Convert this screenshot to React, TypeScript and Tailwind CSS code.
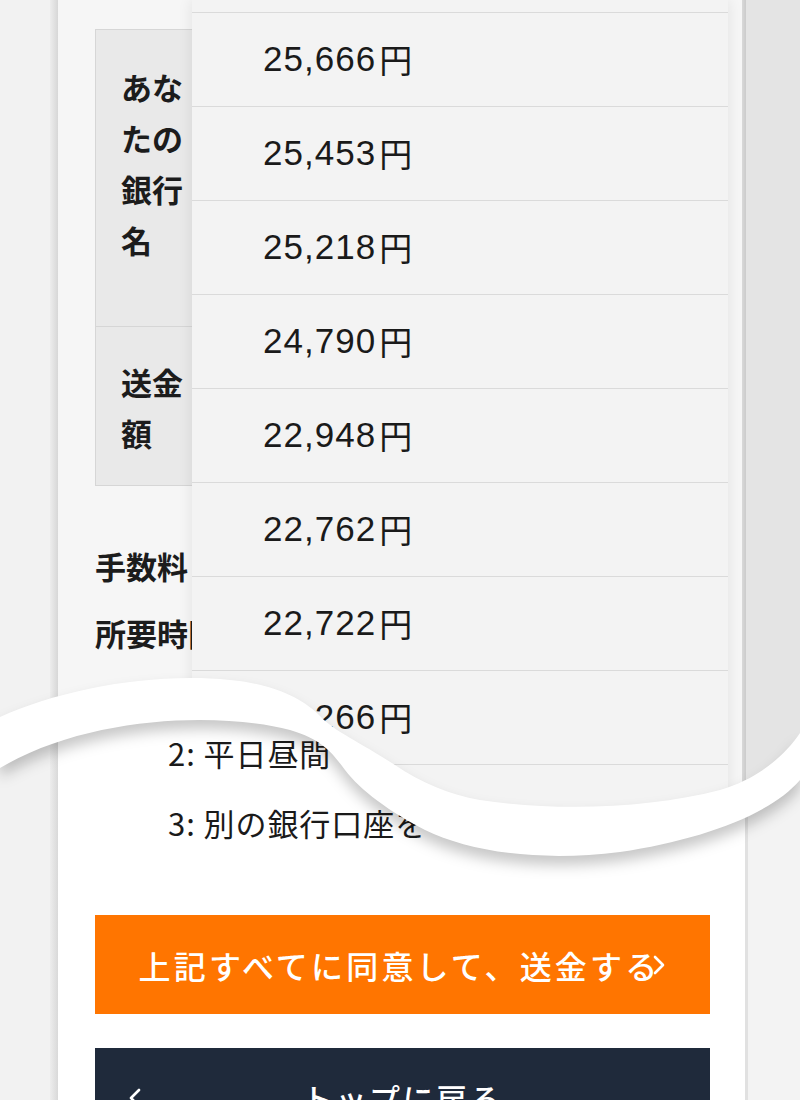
const amounts = [
  "25,666",
  "25,453",
  "25,218",
  "24,790",
  "22,948",
  "22,762",
  "22,722",
  "22,266",
  "",
];

// white torn band between the two captures
const bandPath =
  "M0,717 C60,690 150,672 230,680 C275,684 305,700 320,716 C335,732 360,742 395,765 C420,782 450,795 480,800 C560,812 650,808 720,790 C760,778 785,755 800,733 L800,780 C770,815 700,840 620,852 C540,862 470,852 425,830 C390,812 360,790 345,770 C335,757 325,740 290,730 C220,712 90,715 0,768 Z";

function Chevron({ dir }: { dir: "left" | "right" }) {
  return (
    <svg width="14" height="22" viewBox="0 0 14 22" fill="none" className="shrink-0">
      <path
        d={dir === "right" ? "M3 3 L11 11 L3 19" : "M11 3 L3 11 L11 19"}
        stroke="white"
        strokeWidth="2.6"
        strokeLinecap="round"
        strokeLinejoin="round"
      />
    </svg>
  );
}

export default function App() {
  return (
    <div className="relative h-[1100px] w-[800px] overflow-hidden bg-[#f2f2f2] font-['Noto_Sans_CJK_JP',sans-serif] text-[#1c1c1c]">
      {/* upper capture: form with the amount dropdown open */}
      <div className="relative z-10 flex h-[870px] overflow-hidden [clip-path:path('M0,0_L800,0_L800,739_C785,761_760,784_720,796_C650,814_560,818_480,806_C450,801_420,788_395,771_C360,748_335,738_320,722_C305,706_275,690_230,686_C150,678_60,696_0,723_Z')]">
        <div className="w-[50px] bg-[#f2f2f2]" />
        <div className="w-[8px] bg-gradient-to-r from-[#ededed] to-[#d7d7d7]" />
        <div className="relative w-[684px] bg-[#f6f6f6] pl-[37px] pt-[29px]">
          <div className="grid w-[615px] grid-cols-[97px_1fr] border border-[#d6d6d6]">
            <div className="h-[296px] border-r border-[#d6d6d6] bg-[#e9e9e9] pl-[25px] pt-[31px] text-[31px] font-bold leading-[51px]">
              あな
              <br />
              たの
              <br />
              銀行
              <br />名
            </div>
            <div className="bg-white" />
            <div className="h-[159px] border-r border-t border-[#d6d6d6] bg-[#e9e9e9] pl-[25px] pt-[29px] text-[31px] font-bold leading-[51px]">
              送金
              <br />額
            </div>
            <div className="border-t border-[#d6d6d6] bg-white" />
          </div>
          <div className="mt-[46px] text-[31px] font-bold leading-[67px]">
            <div>手数料</div>
            <div>所要時間</div>
          </div>

          {/* open select list */}
          <div className="absolute left-[134px] top-0 w-[536px] bg-[#f3f3f3] shadow-[0_0_14px_rgba(0,0,0,0.09)]">
            <div className="h-[12px]" />
            {amounts.map((a, i) => (
              <div
                key={i}
                className="flex h-[94px] items-center border-t border-[#dadada] pl-[71px] font-['Liberation_Sans','Noto_Sans_CJK_JP',sans-serif] text-[35px] text-[#1a1a1a]"
              >
                {a && (
                  <>
                    <span className="tracking-[0.03em]">{a}</span>
                    <span className="ml-[3px] font-['Noto_Sans_CJK_JP',sans-serif] text-[33px]">円</span>
                  </>
                )}
              </div>
            ))}
          </div>
        </div>
        <div className="w-[4px] bg-gradient-to-r from-[#d9d9d9] to-[#cbcbcb]" />
        <div className="flex-1 bg-[#e4e4e4]" />
      </div>

      {/* lower capture */}
      <div className="relative z-0 -mt-[180px] flex h-[470px]">
        <div className="w-[50px] bg-[#f2f2f2]" />
        <div className="w-[8px] bg-gradient-to-r from-[#ededed] to-[#d9d9d9]" />
        <div className="w-[687px] bg-white pl-[37px] pr-[35px] pt-[28px]">
          <div className="pl-[73px] text-[31px] leading-[70px] tracking-[0.03em] text-[#1a1a1a]">
            <div>2: 平日昼間</div>
            <div>3: 別の銀行口座を</div>
          </div>
          <button className="mt-[57px] flex h-[99px] w-full items-center justify-center bg-[#ff7500] text-[32px] font-medium tracking-[0.1em] text-white">
            <span>上記すべてに同意して、送金する</span>
            <span className="-ml-[8px]">
              <Chevron dir="right" />
            </span>
          </button>
          <button className="mt-[34px] flex h-[100px] w-full items-center bg-[#1f2a3b] px-[33px] text-[31px] font-medium tracking-[0.08em] text-white">
            <Chevron dir="left" />
            <span className="flex-1 text-center">トップに戻る</span>
            <span className="w-[14px]" />
          </button>
        </div>
        <div className="w-[3px] bg-[#e1e1e1]" />
        <div className="flex-1 bg-[#f3f3f3]" />
      </div>

      {/* tear band drawn over the seam */}
      <svg
        className="pointer-events-none absolute left-0 top-0 z-20"
        width="800"
        height="1100"
        viewBox="0 0 800 1100"
      >
        <defs>
          <filter id="bandShadow" x="-10%" y="-50%" width="120%" height="200%">
            <feGaussianBlur stdDeviation="7" />
          </filter>
        </defs>
        <path d={bandPath} fill="rgba(0,0,0,0.22)" filter="url(#bandShadow)" transform="translate(0 9)" />
        <path d={bandPath} fill="#ffffff" />
      </svg>
    </div>
  );
}
